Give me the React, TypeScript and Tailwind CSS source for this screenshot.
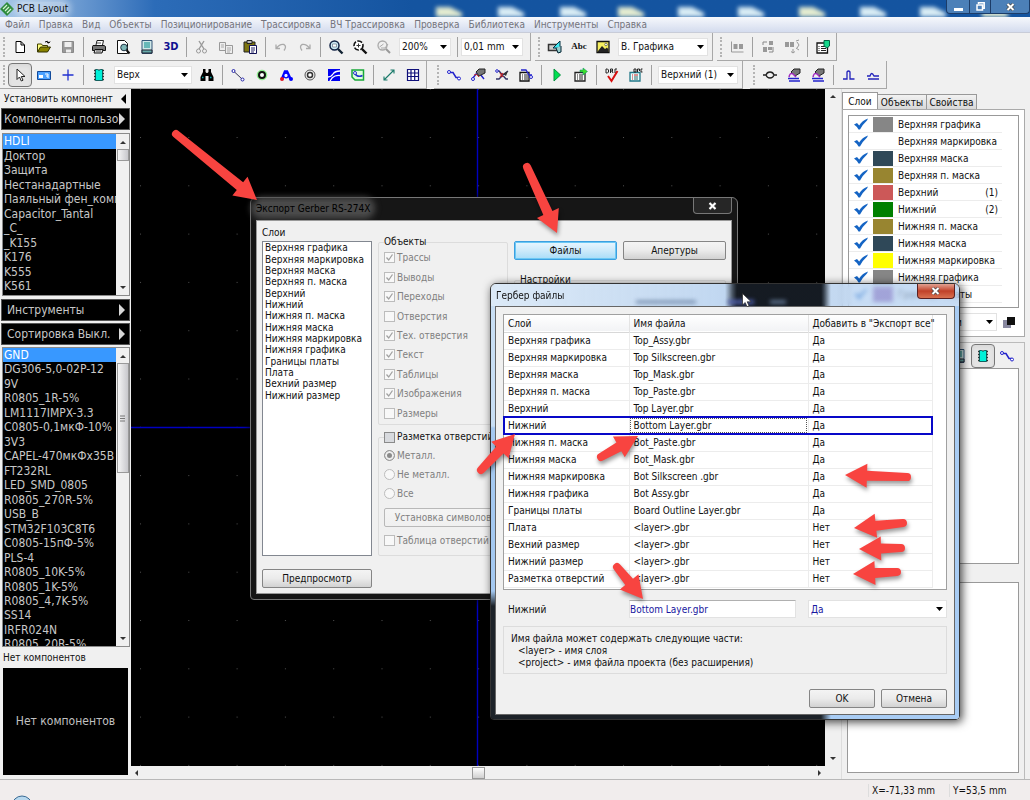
import { useState, type ReactNode } from "react";
import { clsx } from "clsx";

interface Layer {
  name: string;
  color: string;
  num?: string;
}

interface GerberFile {
  layer: string;
  file: string;
  all: string;
}

interface ArrowProps {
  from: [number, number];
  to: [number, number];
}

const menuItems = [
  "Файл", "Правка", "Вид", "Объекты", "Позиционирование", "Трассировка",
  "ВЧ Трассировка", "Проверка", "Библиотека", "Инструменты", "Справка"
];

const libraries = [
  "HDLI", "Доктор", "Защита", "Нестанадартные", "Паяльный фен_комп", "Capacitor_Tantal",
  "_C_", "_K155", "K176", "K555", "K561"
];

const components = [
  "GND", "DG306-5,0-02P-12", "9V", "R0805_1R-5%", "LM1117IMPX-3.3", "C0805-0,1мкФ-10%", "3V3",
  "CAPEL-470мкФx35В", "FT232RL", "LED_SMD_0805", "R0805_270R-5%", "USB_B", "STM32F103C8T6",
  "C0805-15пФ-5%", "PLS-4", "R0805_10K-5%", "R0805_1K-5%", "R0805_4,7K-5%", "SS14",
  "IRFR024N", "R0805_20R-5%"
];

const layers: Layer[] = [
  { name: "Верхняя графика", color: "#868686" },
  { name: "Верхняя маркировка", color: "#ffffff" },
  { name: "Верхняя маска", color: "#2f4858" },
  { name: "Верхняя п. маска", color: "#988530" },
  { name: "Верхний", color: "#cc5858", num: "(1)" },
  { name: "Нижний", color: "#008000", num: "(2)" },
  { name: "Нижняя п. маска", color: "#988530" },
  { name: "Нижняя маска", color: "#2f4858" },
  { name: "Нижняя маркировка", color: "#ffff00" },
  { name: "Нижняя графика", color: "#868686" },
  { name: "Границы платы", color: "#8040a0" }
];

const exportLayers = [
  "Верхняя графика", "Верхняя маркировка", "Верхняя маска", "Верхняя п. маска", "Верхний",
  "Нижний", "Нижняя п. маска", "Нижняя маска", "Нижняя маркировка", "Нижняя графика",
  "Границы платы", "Плата", "Вехний размер", "Нижний размер"
];

const exportObjects = [
  { name: "Трассы", on: true },
  { name: "Выводы", on: true },
  { name: "Переходы", on: true },
  { name: "Отверстия", on: false },
  { name: "Тех. отверстия", on: true },
  { name: "Текст", on: true },
  { name: "Таблицы", on: true },
  { name: "Изображения", on: true },
  { name: "Размеры", on: false }
];

const gerberFiles: GerberFile[] = [
  { layer: "Верхняя графика", file: "Top_Assy.gbr", all: "Да" },
  { layer: "Верхняя маркировка", file: "Top Silkscreen.gbr", all: "Да" },
  { layer: "Верхняя маска", file: "Top_Mask.gbr", all: "Да" },
  { layer: "Верхняя п. маска", file: "Top_Paste.gbr", all: "Да" },
  { layer: "Верхний", file: "Top Layer.gbr", all: "Да" },
  { layer: "Нижний", file: "Bottom Layer.gbr", all: "Да" },
  { layer: "Нижняя п. маска", file: "Bot_Paste.gbr", all: "Да" },
  { layer: "Нижняя маска", file: "Bot_Mask.gbr", all: "Да" },
  { layer: "Нижняя маркировка", file: "Bot Silkscreen .gbr", all: "Да" },
  { layer: "Нижняя графика", file: "Bot Assy.gbr", all: "Да" },
  { layer: "Границы платы", file: "Board Outline Layer.gbr", all: "Да" },
  { layer: "Плата", file: "<layer>.gbr", all: "Нет" },
  { layer: "Вехний размер", file: "<layer>.gbr", all: "Нет" },
  { layer: "Нижний размер", file: "<layer>.gbr", all: "Нет" },
  { layer: "Разметка отверстий", file: "<layer>.gbr", all: "Нет" }
];

const arrows: ArrowProps[] = [
  { from: [176, 134], to: [257, 200] },
  { from: [527, 167], to: [557, 233] },
  { from: [481, 470], to: [515, 434] },
  { from: [601, 457], to: [638, 436] },
  { from: [617, 567], to: [643, 599] },
  { from: [907, 477], to: [845, 475] },
  { from: [903, 523], to: [854, 528] },
  { from: [901, 548], to: [859, 549] },
  { from: [897, 572], to: [853, 574] }
];

// 16x16 toolbar glyphs
const glyphs: Record<string, ReactNode> = {
  file: <path d="M4 2.5h5l3.5 3.5v7.5h-8.5zM9 2.5v3.5h3.5" fill="#fff" stroke="#000" />,
  open: (
    <>
      <path d="M1.500 13V5h4l1 1.500h5V8" fill="#ffff80" stroke="#404000" />
      <path d="M1.500 13l3-5h10l-3 5z" fill="#8a8400" stroke="#303000" />
      <path d="M9 3q3-2 4 1l1-1.500M13 4l-2-.5" fill="none" stroke="#000" />
    </>
  ),
  save: (
    <>
      <path d="M2.500 2.500h11v11h-11z" fill="#999" stroke="#888" />
      <path d="M4.500 3h7v5h-7zM6 10.500h5v3h-5z" fill="#eee" />
    </>
  ),
  print: (
    <>
      <path d="M5 6l1-4.500h6.500L11.500 6" fill="#fff" stroke="#222" />
      <path d="M2 6.500h11l1.500 1v4h-13v-4z" fill="#777" stroke="#111" />
      <path d="M4 10.500h8l-1 3.500H3z" fill="#ddd" stroke="#111" />
      <path d="M6 4h4M5 12h5" stroke="#555" />
    </>
  ),
  preview: (
    <>
      <path d="M2.500 1.500h7l3 3v10h-10z" fill="#fff" stroke="#111" />
      <circle cx="9" cy="8.500" r="3.300" fill="#7fb8b8" stroke="#234" />
      <path d="M11.500 11l3 3.500" stroke="#111" strokeWidth="2" />
    </>
  ),
  report: (
    <>
      <path d="M3 1.500h10v13H3z" fill="#cfe8e8" stroke="#357" />
      <path d="M5 4h6M5 6h6M5 8h6" stroke="#088" />
      <path d="M3 11h10v3H3z" fill="#6aa" stroke="#223" />
    </>
  ),
  cut: (
    <>
      <path d="M5 2l5 8M10 2l-5 8" stroke="#999" strokeWidth="1.400" />
      <circle cx="4.500" cy="12" r="2" fill="none" stroke="#999" />
      <circle cx="10.500" cy="12" r="2" fill="none" stroke="#999" />
    </>
  ),
  copy: (
    <>
      <path d="M1.500 3.500h6v8h-6zM7.500 6.500h7v8h-7z" fill="#eee" stroke="#999" />
      <path d="M3 6h3M3 8h3M9 9h4M9 11h4M9 13h3" stroke="#aaa" />
    </>
  ),
  paste: (
    <>
      <path d="M2 3h11v10H2z" fill="#7c7410" stroke="#222" />
      <path d="M5 1.500h5v3H5z" fill="#bbb" stroke="#222" />
      <path d="M7.500 6.500h7v8h-7z" fill="#fff" stroke="#115" />
      <path d="M9 9h4M9 11h4M9 13h3" stroke="#226" />
    </>
  ),
  undo: <path d="M3 5.500v4h4M3 9.500q4-5 8-4 3 2 0 6" fill="none" stroke="#aaa" strokeWidth="1.300" />,
  redo: <path d="M13 5.500v4H9M13 9.500q-4-5-8-4-3 2 0 6" fill="none" stroke="#aaa" strokeWidth="1.300" />,
  zoom: (
    <>
      <circle cx="6.500" cy="6.500" r="4.500" fill="#cdeaf5" stroke="#124" strokeWidth="1.500" />
      <path d="M4.500 5h4v3h-4z" fill="#fff" stroke="#678" strokeWidth=".7" />
      <path d="M10 10l4.500 4.500" stroke="#123" strokeWidth="2.400" />
    </>
  ),
  zoomFit: (
    <>
      <circle cx="6.500" cy="6.500" r="4.500" fill="#fff" stroke="#111" strokeWidth="1.600" strokeDasharray="5 1.500" />
      <path d="M4.500 6.500h4M6.500 4.500v4" stroke="#333" />
      <path d="M10 10l4.500 4.500" stroke="#111" strokeWidth="2.400" />
    </>
  ),
  zoomBack: (
    <>
      <circle cx="6.500" cy="6.500" r="4.500" fill="none" stroke="#aaa" strokeWidth="1.300" />
      <path d="M3.500 8l4-3M5 9h4l3-4" fill="none" stroke="#aaa" />
      <path d="M10 10l4 4" stroke="#999" strokeWidth="2" />
    </>
  ),
  place: (
    <>
      <path d="M1.500 5.500h9v6h-9z" fill="#ccc" stroke="#333" strokeWidth="1.500" />
      <path d="M6 9l7-7v7z" fill="#40e8f0" stroke="#034" />
      <path d="M9 9l2 5 3-1V7" fill="#9cc" stroke="#023" />
    </>
  ),
  picture: (
    <>
      <path d="M2 2.500h12v11H2z" fill="#f5ee60" stroke="#111" strokeWidth="1.300" />
      <path d="M3 12l4-5 3 3 2-1.500 1.500 2V13H3z" fill="#222" />
      <circle cx="11" cy="5.500" r="1.300" fill="#fff" stroke="#333" strokeWidth=".6" />
    </>
  ),
  align: (
    <>
      <path d="M2.500 2.500v10.500h12" fill="none" stroke="#999" />
      <path d="M4.500 5h4v5h-4zM10 5h4v5h-4z" fill="#999" />
    </>
  ),
  shift: (
    <>
      <path d="M9 2h4v4H9zM3 8h4v5H3zM8 8h4v3H8z" fill="#999" />
      <path d="M3 6V3h4M13 8v5H9" fill="none" stroke="#888" />
    </>
  ),
  expand: (
    <>
      <path d="M1 3h4v5H1zM6 3h4v5H6z" fill="#999" />
      <path d="M12 2l3-1M12 9l3 2M13 3l2 3-2 3M9 10v4l-2-1.500M9 14l2-1.500" fill="none" stroke="#999" />
    </>
  ),
  sheet: (
    <>
      <path d="M2 4h10.500v10H2z" fill="#fff" stroke="#111" strokeWidth="1.300" />
      <path d="M3.500 7.500h1M6 7.500h5M3.500 9.500h1M6 9.500h5M3.500 11.500h1M6 11.500h5" stroke="#222" />
      <path d="M9 1.500h5.500V7L12 9 9 7z" fill="#15d78a" stroke="#064" />
    </>
  ),
  pointer: <path d="M5 2v10.500l2.500-2.500 1.800 4 1.700-.8-1.700-3.700H13z" fill="#fff" stroke="#222" />,
  board: (
    <>
      <path d="M1.500 4.500h13v8h-13z" fill="#4aa0ff" stroke="#124a9a" />
      <path d="M3 8h4v3H3z" fill="#fff" />
      <path d="M9 7h3v4M10 9h2" fill="none" stroke="#fff" />
    </>
  ),
  plus: <path d="M8 2.500v11M2.500 8h11" stroke="#2030d0" strokeWidth="1.300" />,
  chip: (
    <>
      <path d="M3 3.500h10M3 6.500h10M3 9.500h10M3 12.500h10" stroke="#333" strokeWidth="1.500" />
      <path d="M4.500 2.500h2q1.500 1.500 3 0h2v11h-7z" fill="#00f0d8" stroke="#044" strokeWidth=".8" />
    </>
  ),
  binoculars: (
    <>
      <path d="M4 2h2.500v3l1 1h1l1-1V2H12v3l2.500 5v4H9.500V9h-3v5H1.500v-4L4 5z" fill="#000" />
      <path d="M3 10.500h1.500M11 10.500h1.500" stroke="#0aa" strokeWidth="1.500" />
    </>
  ),
  line: (
    <>
      <path d="M4 4.500l8 7.500" stroke="#335" />
      <circle cx="3.500" cy="4" r="1.500" fill="#fff" stroke="#22a" />
      <circle cx="12.500" cy="12.500" r="1.500" fill="#fff" stroke="#22a" />
    </>
  ),
  pad: (
    <>
      <circle cx="8" cy="8" r="4.800" fill="#9f9" stroke="#8e8" />
      <circle cx="8" cy="8" r="3" fill="#fff" stroke="#111" strokeWidth="2" />
    </>
  ),
  arc: (
    <>
      <path d="M4 12L7 4.500h2L12.500 12" fill="none" stroke="#00f" strokeWidth="2.600" />
      <circle cx="4" cy="12" r="2" fill="#e01020" />
      <circle cx="8" cy="8.500" r="2.300" fill="#f4f4ff" stroke="#00f" strokeWidth="1.300" />
      <circle cx="13" cy="12" r="2" fill="#00f" />
    </>
  ),
  via: (
    <>
      <circle cx="8" cy="8" r="5" fill="#eee" stroke="#555" />
      <circle cx="8" cy="8" r="2.500" fill="#fff" stroke="#333" strokeWidth="1.500" />
    </>
  ),
  copper: (
    <>
      <path d="M2 2h12v12H2z" fill="#0000f0" />
      <path d="M2 10q3 0 5-3t7-3M4 14q2-4 5-5t5-.5" fill="none" stroke="#fff" strokeWidth="1.300" />
    </>
  ),
  pour: (
    <>
      <path d="M2 3h11.500v10H5L2 10z" fill="#dfd" stroke="#18a838" strokeWidth="1.500" />
      <path d="M4.500 6q3 5 8 2.500" fill="none" stroke="#23c" strokeWidth="1.500" />
      <circle cx="5" cy="6" r="1.500" fill="#fff" stroke="#23c" />
    </>
  ),
  measure: <path d="M3 13L13 3M9.500 3H13v3.500M3 9.500V13h3.500" fill="none" stroke="#1a7a6a" strokeWidth="1.100" />,
  grid: <path d="M2.500 2.500h11v11h-11zM2.500 6h11M2.500 9.500h11M6 2.500v11M9.700 2.500v11" fill="#fff" stroke="#10107a" strokeWidth="1.200" />,
  route: (
    <>
      <path d="M3.500 5.500h3.500l3 5h2.500" fill="none" stroke="#22c" strokeWidth="1.500" />
      <circle cx="3" cy="5" r="1.500" fill="#fff" stroke="#22c" />
      <circle cx="13" cy="11.500" r="1.500" fill="#fff" stroke="#22c" />
    </>
  ),
  reroute: (
    <>
      <path d="M3 11l3-4h4l4 5" fill="none" stroke="#22c" strokeWidth="1.400" />
      <path d="M6 5l3-3h6v4l-6 3z" fill="#777" stroke="#222" />
      <path d="M4 8q3-2 5 2" fill="none" stroke="#c22" />
      <circle cx="3" cy="12" r="1.500" fill="#fff" stroke="#22c" />
    </>
  ),
  unroute: (
    <>
      <path d="M2 4h3l7 8h2M2 12h3l5-5 4-3" fill="none" stroke="#336" strokeWidth="1.400" />
      <path d="M9 7l5-3-2 5z" fill="#333" />
      <circle cx="3" cy="4" r="1.300" fill="#fff" stroke="#22c" />
      <path d="M6 6l3 4M9 6l-3 4" stroke="#c22" strokeWidth="1.200" />
    </>
  ),
  setup: (
    <>
      <path d="M2 5.500h9v8.500H2z" fill="#fff" stroke="#111" strokeWidth="1.300" />
      <path d="M4 8h1M6 8h4M4 10h1M6 10h4M4 12h1M6 12h4" stroke="#222" />
      <path d="M3 3h5l3 5h3" fill="none" stroke="#22c" strokeWidth="1.300" />
      <circle cx="13" cy="10" r="1.500" fill="#fff" stroke="#22c" />
    </>
  ),
  run: <path d="M5 2l6.500 6L5 14z" fill="#00e050" stroke="#089040" />,
  runList: (
    <>
      <path d="M2 5.500h10v8.500H2z" fill="#fff" stroke="#222" strokeWidth="1.300" />
      <path d="M4 8h1M6 8h4M4 10h1M6 10h4M4 12h1M6 12h4" stroke="#222" />
      <path d="M7 5V3h3V1l4.500 3.500L10 8V5z" fill="#3ee02a" stroke="#086" strokeWidth=".5" />
    </>
  ),
  drc: (
    <>
      <path d="M2 6V2h1.500L4.500 3v2l-1 1zM6.500 6V2h2v2h-2M8 4l1 2M13 2h-2v4h2" fill="none" stroke="#222" strokeWidth="1" />
      <path d="M4 9l3.500 5L13.500 4" fill="none" stroke="#d81010" strokeWidth="2" />
    </>
  ),
  drcSetup: (
    <>
      <path d="M2 5.500h10v8.500H2z" fill="#e8ffff" stroke="#278" strokeWidth="1.300" />
      <path d="M4 8h1M6 8h4M4 10h1M4 12h1" stroke="#c22" />
      <path d="M6 10h4M6 12h4" stroke="#366" />
      <path d="M6 5V2h2v3zM9.500 5V2h2v2M14.500 2H13v3h1.500" fill="none" stroke="#222" />
    </>
  ),
  pair: <path d="M1 8h3M12 8h3M4 8q1-3 4-3t4 3M4 8q1 3 4 3t4-3" fill="none" stroke="#222" strokeWidth="1.300" />,
  pairEdit: (
    <>
      <path d="M5 5l3-3h6v4l-5 3z" fill="#777" stroke="#222" />
      <path d="M3 10q1-5 4-3l3 3" fill="none" stroke="#a22ac0" strokeWidth="1.500" />
      <path d="M2 11.500h11M3 14h11" stroke="#22c" strokeWidth="1.300" />
    </>
  ),
  pulse: <path d="M2 12h4V5q1.500-2 3 0v7h4.500" fill="none" stroke="#22b" strokeWidth="1.300" />,
  pulseLow: <path d="M2 9h3q1.500-5 4 0h5M3 12h11" fill="none" stroke="#22b" strokeWidth="1.300" />,
  squares: (
    <>
      <path d="M2 6h8v8H2z" fill="#8888a0" />
      <path d="M6 3h8v8H6z" fill="#111" />
    </>
  )
};

function Icon({ name }: { name: string }) {
  return (
    <svg className="h-4 w-4 shrink-0" viewBox="0 0 16 16">
      {glyphs[name]}
    </svg>
  );
}

function Tool({ name, pressed }: { name: string; pressed?: boolean }) {
  return (
    <button
      type="button"
      aria-label={name}
      className={clsx(
        "flex h-6 w-6 items-center justify-center",
        pressed && "rounded-sm border border-[#777] bg-[#e4e4e4] shadow-inner"
      )}
    >
      <Icon name={name} />
    </button>
  );
}

function Sep() {
  return (
    <div className="flex w-[7px] justify-center">
      <div className="h-5 w-px bg-[#a0a0a0]" />
    </div>
  );
}

function Toolbar({ children }: { children: ReactNode }) {
  return (
    <div className="flex h-7 items-center border-r border-b border-[#a8a8a8] pr-px">
      <div className="flex w-2 justify-center">
        <div className="h-5 border-l-2 border-dotted border-[#b4b4b4]" />
      </div>
      {children}
    </div>
  );
}

function Combo({ label, value, className }: { label: string; value: string; className?: string }) {
  return (
    <div className={clsx("relative shrink-0", className)}>
      <select
        aria-label={label}
        className="block h-[18px] w-full appearance-none border border-[#e2e2e2] bg-white pl-[2px] text-inherit outline-none"
      >
        <option>{value}</option>
      </select>
      <svg className="pointer-events-none absolute top-[7px] right-1 h-1 w-[7px]" viewBox="0 0 7 4">
        <path d="M0 0h7L3.500 4z" fill="#000" />
      </svg>
    </div>
  );
}

function PanelButton({ children, wide }: { children: ReactNode; wide?: boolean }) {
  return (
    <button
      type="button"
      className={clsx(
        "flex h-[22px] w-full items-center justify-between overflow-hidden border border-[#555] bg-black pr-1 text-[12px] text-[#c8c8c8]",
        wide ? "pl-[2px]" : "pl-[5px]"
      )}
    >
      <span className="overflow-hidden whitespace-nowrap">{children}</span>
      <svg className="h-3 w-[6px] shrink-0" viewBox="0 0 6 12">
        <path d="M0 0l6 6-6 6z" fill="#d8d8d8" />
      </svg>
    </button>
  );
}

function ScrollArrow({ dir }: { dir: "up" | "down" | "left" | "right" }) {
  const paths = {
    up: "M1 6h6L4 3z",
    down: "M1 2h6L4 5z",
    left: "M5 1v6L2 4z",
    right: "M3 1v6l3-3z"
  };
  return (
    <svg className="h-2 w-2 shrink-0" viewBox="0 0 8 8">
      <path d={paths[dir]} fill="#333" />
    </svg>
  );
}

function ListScroll({ thumb, grip }: { thumb: string; grip?: boolean }) {
  return (
    <div className="flex w-[13px] shrink-0 flex-col items-center bg-[#f0f0f0] pt-1 pb-[3px]">
      <ScrollArrow dir="up" />
      <div className={clsx("mt-[3px] flex w-3 items-center justify-center border border-[#999] bg-linear-to-r from-[#f5f5f5] to-[#c8c8cc]", thumb)}>
        {grip && (
          <svg className="h-[7px] w-[5px]" viewBox="0 0 5 7">
            <path d="M0 1h5M0 3.500h5M0 6h5" stroke="#777" />
          </svg>
        )}
      </div>
      <div className="grow" />
      <ScrollArrow dir="down" />
    </div>
  );
}

function DarkList({ items, selected, onSelect, rowsClass, children }: {
  items: string[];
  selected: string;
  onSelect: (item: string) => void;
  rowsClass: string;
  children: ReactNode;
}) {
  return (
    <div className="flex h-full overflow-hidden border border-[#8a8a8a] bg-black">
      <ul className={clsx("flex min-w-0 grow flex-col text-[12px] leading-[14px] text-[#c8c8c8]", rowsClass)}>
        {items.map((item) => (
          <li
            key={item}
            onClick={() => onSelect(item)}
            className={clsx(
              "flex-1 overflow-hidden pl-px whitespace-nowrap",
              item === selected && "bg-[#3898ff] text-white"
            )}
          >
            {item}
          </li>
        ))}
      </ul>
      {children}
    </div>
  );
}

function Check({ label, checked, disabled = true }: { label: string; checked?: boolean; disabled?: boolean }) {
  return (
    <label className={clsx("flex items-center gap-[2px] whitespace-nowrap", disabled && "text-[#808080]")}>
      <span className="relative h-[11px] w-[11px] shrink-0">
        <input
          type="checkbox"
          defaultChecked={checked}
          disabled={disabled}
          className={clsx(
            "peer block h-[11px] w-[11px] appearance-none border",
            disabled ? "border-[#bcbcbc] bg-[#f8f8f8]" : "border-[#8a8a8a] bg-[#d8dade]"
          )}
        />
        <svg className="pointer-events-none absolute inset-0 hidden h-[11px] w-[11px] peer-checked:block" viewBox="0 0 11 11">
          <path d="M2.500 5.500l2.200 2.500 3.800-5.500" fill="none" stroke="#a0a0a0" strokeWidth="1.300" />
        </svg>
      </span>
      {label}
    </label>
  );
}

function Radio({ label, checked }: { label: string; checked?: boolean }) {
  return (
    <label className="flex items-center gap-[2px] text-[#808080]">
      <input
        type="radio"
        name="drill"
        disabled
        defaultChecked={checked}
        className="h-[11px] w-[11px] appearance-none rounded-full border border-[#bcbcbc] bg-[#f8f8f8] checked:border-[#999] checked:bg-[#8a8a8a] checked:shadow-[inset_0_0_0_2px_#eee]"
      />
      {label}
    </label>
  );
}

function WinButton({ children, className }: { children: ReactNode; className?: string }) {
  return (
    <button
      type="button"
      className={clsx(
        "h-[19px] rounded-xs border bg-linear-to-b",
        className ?? "border-[#858585] from-[#f4f4f4] via-[#ebebeb] to-[#d2d2d2]"
      )}
    >
      {children}
    </button>
  );
}

function CloseMark() {
  return (
    <svg className="h-2 w-[9px]" viewBox="0 0 9 8">
      <path d="M1.500 1l6 6M7.500 1l-6 6" stroke="#444" strokeWidth="3.400" />
      <path d="M1.500 1l6 6M7.500 1l-6 6" stroke="#fff" strokeWidth="2" />
    </svg>
  );
}

function Arrow({ from, to }: ArrowProps) {
  const dx = to[0] - from[0];
  const dy = to[1] - from[1];
  const len = Math.hypot(dx, dy);
  const angle = (Math.atan2(dy, dx) * 180) / Math.PI;
  return (
    <g transform={`translate(${from[0]} ${from[1]}) rotate(${angle})`} fill="#f84440">
      <path d={`M0 -4L${len - 22} -5V-12L${len} 0L${len - 22} 12V5L0 4A4 4 0 0 1 0 -4Z`} />
    </g>
  );
}

function ExportDialog() {
  return (
    <section className="absolute top-[197px] left-[250px] flex h-[403px] w-[488px] flex-col rounded-t-md rounded-b-sm border border-[#777] bg-[#161616] p-[5px] pt-0 shadow-[0_0_8px_rgba(0,0,0,0.8)]">
      <header className="flex h-[22px] shrink-0 justify-between">
        <h2 className="mt-1 h-3 rounded-full bg-[#4a4a4a] text-black shadow-[0_0_6px_5px_#4a4a4a]">Экспорт Gerber RS-274X</h2>
        <button
          type="button"
          aria-label="Закрыть"
          className="flex h-4 w-[39px] items-center justify-center rounded-b border border-t-0 border-[#777] bg-[#262626]"
        >
          <CloseMark />
        </button>
      </header>

      <div className="flex grow gap-[6px] border border-[#999] bg-[#f0f0f0] pt-[5px] pl-[5px]">
        {/* Layer list */}
        <div className="flex w-[110px] shrink-0 flex-col">
          <h3 className="h-[15px] leading-[14px]">Слои</h3>
          <div className="h-[315px] border border-[#828790] bg-white pl-[2px]">
            <ul className="flex h-[159px] flex-col leading-[11px]">
              {exportLayers.map((name) => (
                <li key={name} className="flex min-h-0 flex-1 items-center whitespace-nowrap">{name}</li>
              ))}
            </ul>
          </div>
          <div className="mt-[13px] flex flex-col">
            <WinButton>Предпросмотр</WinButton>
          </div>
        </div>

        {/* Objects */}
        <div className="flex w-[130px] shrink-0 flex-col pt-[10px]">
          <fieldset className="rounded-xs border border-[#dcdcdc] px-[5px] pb-px">
            <legend className="leading-[12px]">Объекты</legend>
            <div className="flex h-[175px] flex-col">
              {exportObjects.map((obj) => (
                <div key={obj.name} className="flex flex-1 items-center">
                  <Check label={obj.name} checked={obj.on} />
                </div>
              ))}
            </div>
          </fieldset>
          <fieldset className="mt-[6px] rounded-xs border border-[#dcdcdc] px-[5px] pb-2">
            <legend className="leading-[12px]">
              <Check label="Разметка отверстий" disabled={false} />
            </legend>
            <div className="mt-[6px] flex flex-col gap-[6px] leading-[13px]">
              <Radio label="Металл." checked />
              <Radio label="Не металл." />
              <Radio label="Все" />
            </div>
            <div className="mt-2 mb-[7px] flex flex-col text-[#808080]">
              <WinButton className="border-[#b8b8b8] from-[#f4f4f4] to-[#f0f0f0] whitespace-nowrap">Установка символов</WinButton>
            </div>
            <Check label="Таблица отверстий" />
          </fieldset>
        </div>

        {/* Settings */}
        <div className="flex grow flex-col gap-[14px] pt-[15px] pr-[5px]">
          <div className="grid grid-cols-2 gap-[6px]">
            <WinButton className="border-[#3c9fe0] from-[#e8f6ff] via-[#cdeafa] to-[#a8dcf8] ring-1 ring-[#6cc8f4] ring-inset">Файлы</WinButton>
            <WinButton>Апертуры</WinButton>
          </div>
          <fieldset className="grow rounded-xs border border-[#dcdcdc] px-[5px]">
            <legend className="leading-[12px]">Настройки</legend>
          </fieldset>
        </div>
      </div>
    </section>
  );
}

function GerberDialog() {
  const [selected, setSelected] = useState("Нижний");
  const [fileName, setFileName] = useState("Bottom Layer.gbr");

  const handleSelect = (row: GerberFile) => {
    setSelected(row.layer);
    setFileName(row.file);
  };

  return (
    <section className="absolute top-[283px] left-[490px] flex h-[437px] w-[470px] flex-col overflow-hidden rounded-t-md rounded-b-sm border border-[#333] shadow-[2px_2px_10px_rgba(0,0,0,0.75)]">
      {/* Glass caption */}
      <header className="flex h-[22px] shrink-0 justify-between bg-[linear-gradient(90deg,rgba(216,232,248,.85)_0,rgba(176,206,240,.75)_234px,rgba(22,28,36,.96)_246px,rgba(22,28,36,.96)_330px,rgba(176,206,240,.7)_340px)] pr-1 pl-[5px] backdrop-blur-[2px]">
        <h2 className="mt-[5px] leading-[13px]">Гербер файлы</h2>
        <svg className="mt-[15px] h-2 w-[210px] blur-[2px]" viewBox="0 0 210 8" aria-hidden="true">
          <path d="M0 3h60" stroke="#7088a8" strokeWidth="3" />
          <path d="M92 3h26" stroke="#5060b0" strokeWidth="4" />
          <path d="M134 3h16" stroke="#7088a8" strokeWidth="3" />
        </svg>
        <button
          type="button"
          aria-label="Закрыть окно"
          className="flex h-[15px] w-[38px] items-center justify-center rounded-b border border-t-0 border-[#5a2020] bg-linear-to-b from-[#e0a090] via-[#c04028] to-[#d87050]"
        >
          <CloseMark />
        </button>
      </header>

      <div className="flex grow bg-[linear-gradient(180deg,#c8def4_0,#c8def4_120px,#a4c8f0_122px,#a4c8f0_285px,#1c2228_300px)]">
        <div className="w-1 shrink-0" />
        <div className="flex grow flex-col border border-[#666] bg-[#f0f0f0] px-[7px] pt-[7px]">
          <div className="h-[276px] border border-[#a0a0a0] bg-white">
            <table className="w-[428px] table-fixed border-collapse text-left">
              <colgroup>
                <col className="w-[125px]" />
                <col className="w-[179px]" />
                <col className="w-[124px]" />
              </colgroup>
              <thead>
                <tr className="h-[17px] border-b border-[#d8d8d8] bg-linear-to-b from-white to-[#f2f3f5]">
                  <th className="border-r border-[#e4e4e4] pl-1 font-normal">Слой</th>
                  <th className="border-r border-[#e4e4e4] pl-1 font-normal">Имя файла</th>
                  <th className="border-r border-[#e4e4e4] pl-1 font-normal whitespace-nowrap">Добавить в "Экспорт все"</th>
                </tr>
              </thead>
              <tbody>
                {gerberFiles.map((row) => {
                  const active = row.layer === selected;
                  return (
                    <tr
                      key={row.layer}
                      onClick={() => handleSelect(row)}
                      className={clsx(
                        "h-[17px] border-b border-[#ececec]",
                        active && "outline-2 -outline-offset-1 outline-[#0808c8]"
                      )}
                    >
                      <td className="border-r border-[#ececec] pl-1">{row.layer}</td>
                      <td className={clsx("border-r border-[#ececec] pl-1", active && "outline-1 -outline-offset-2 outline-dotted outline-[#555]")}>{row.file}</td>
                      <td className="border-r border-[#ececec] pl-1">{row.all}</td>
                    </tr>
                  );
                })}
              </tbody>
            </table>
          </div>

          <div className="mt-[10px] flex h-[18px] items-center pl-[5px]">
            <label htmlFor="gerber-name" className="w-[121px]">{selected}</label>
            <input
              id="gerber-name"
              value={fileName}
              onChange={(e) => setFileName(e.target.value)}
              className="mr-3 h-[18px] w-[167px] border border-[#e2e2e2] border-t-[#b0b0b0] bg-white text-[#1818a0] outline-none"
            />
            <Combo label='Добавить в "Экспорт все"' value="Да" className="grow text-[#1818a0]" />
          </div>

          <div className="mt-2 h-[48px] border border-[#dcdcdc] pt-[6px] pl-[7px] leading-[12px]">
            <p>Имя файла может содержать следующие части:</p>
            <p className="pl-[7px]">&lt;layer&gt; - имя слоя</p>
            <p className="pl-[7px]">&lt;project&gt; - имя файла проекта (без расширения)</p>
          </div>

          <div className="mt-[15px] flex justify-end">
            <div className="grid w-[138px] grid-cols-2 gap-[6px]">
              <WinButton>OK</WinButton>
              <WinButton>Отмена</WinButton>
            </div>
          </div>
        </div>
        <div className="w-1 shrink-0 bg-[#a8ccf4]" />
      </div>
      <div className="h-1 shrink-0 bg-[linear-gradient(90deg,#1c2228_0,#1c2228_330px,#a8ccf4_340px)]" />
    </section>
  );
}

function LeftPanel() {
  const [library, setLibrary] = useState("HDLI");
  const [component, setComponent] = useState("GND");

  return (
    <aside className="flex w-[131px] shrink-0 flex-col bg-[#f0f0f0] pr-px pl-px">
      <div className="flex h-[19px] items-center justify-between pr-1 pl-[3px]">
        <span>Установить компонент</span>
        <svg className="h-[10px] w-[5px]" viewBox="0 0 5 10">
          <path d="M5 0v10L0 5z" fill="#000" />
        </svg>
      </div>
      <PanelButton wide>Компоненты пользов</PanelButton>
      <div className="mt-[3px] h-[163px] pl-px">
        <DarkList items={libraries} selected={library} onSelect={setLibrary} rowsClass="h-[160px]">
          <ListScroll thumb="h-3" />
        </DarkList>
      </div>
      <div className="mt-[3px] flex flex-col gap-[2px]">
        <PanelButton>Инструменты</PanelButton>
        <PanelButton>Сортировка Выкл.</PanelButton>
      </div>
      <div className="mt-[2px] h-[300px] pl-px">
        <DarkList items={components} selected={component} onSelect={setComponent} rowsClass="h-[304px]">
          <ListScroll thumb="h-[110px]" grip />
        </DarkList>
      </div>
      <div className="flex h-[21px] items-center pl-[2px]">Нет компонентов</div>
      <div className="mx-[2px] mb-1 flex grow items-center justify-center bg-black text-[12px] text-[#c0c0c0]">
        Нет компонентов
      </div>
    </aside>
  );
}

function RightPanel() {
  return (
    <aside className="flex w-[189px] shrink-0 flex-col border-l border-[#ddd] bg-[#f0f0f0] pt-[3px] pr-[5px]">
      <div role="tablist" className="flex items-end">
        <button role="tab" type="button" className="h-[17px] w-9 border border-b-0 border-[#999] bg-white">Слои</button>
        <button role="tab" type="button" className="h-[15px] w-[49px] border border-b-0 border-l-0 border-[#999] bg-linear-to-b from-[#f2f2f2] to-[#d8d8d8]">Объекты</button>
        <button role="tab" type="button" className="h-[15px] w-[50px] border border-b-0 border-l-0 border-[#999] bg-linear-to-b from-[#f2f2f2] to-[#d8d8d8]">Свойства</button>
      </div>
      <div className="flex h-[228px] flex-col border border-[#aaa] bg-white p-[5px]">
        <ul className="h-[194px] border border-[#999] pr-4">
          {layers.map((layer) => (
            <li key={layer.name} className="flex h-[17px] items-center border-b border-[#ececec]">
              <label className="flex grow items-center">
                <span className="relative flex h-4 w-6 items-center justify-center">
                  <input type="checkbox" defaultChecked className="peer absolute inset-0 appearance-none" />
                  <svg className="hidden h-3 w-4 peer-checked:block" viewBox="0 0 16 12">
                    <path d="M1 6.500l3-1.500 2.200 2.500Q9 2.500 15 .5l-1 2Q10 6 7 11.500H5.500Q4 8.500 1 6.500z" fill="#1464c4" />
                  </svg>
                </span>
                <span className="mr-[5px] h-[15px] w-5" style={{ backgroundColor: layer.color }} />
                <span className="grow whitespace-nowrap">{layer.name}</span>
                <span className="pr-1">{layer.num}</span>
              </label>
            </li>
          ))}
        </ul>
        <div className="mt-[5px] flex items-center gap-1">
          <Combo label="Слои" value="Показать верхние слои" className="grow" />
          <button type="button" aria-label="Порядок слоев" className="w-[18px]">
            <Icon name="squares" />
          </button>
        </div>
      </div>

      <div className="mt-[5px] flex grow flex-col border-t border-r border-[#bbb] pr-[5px] pl-[5px]">
        <div className="flex h-[25px] items-center justify-end">
          <Tool name="report" />
          <Tool name="chip" pressed />
          <Tool name="route" />
        </div>
        <div className="h-[196px] border border-[#999] bg-white" />
        <div className="mt-[18px] mb-[6px] grow border border-[#999] bg-white" />
      </div>
    </aside>
  );
}

export default function App() {
  return (
    <div className="relative flex h-screen min-h-[800px] flex-col overflow-hidden bg-[#f0f0f0] font-['DejaVu_Sans_Condensed','DejaVu_Sans',sans-serif] text-[10px] leading-[13px] text-[#111]">
      {/* Title bar */}
      <header className="relative flex h-[17px] shrink-0 items-center justify-between overflow-hidden bg-linear-to-r from-[#a8c8e8] via-[#2c6cb8] via-15% to-[#1454a0] to-40%">
        <svg className="absolute inset-0 h-full w-full blur-[2px]" aria-hidden="true">
          {[436, 498, 560, 618, 678, 738, 799, 860, 920, 982].map((x, i) => (
            <path key={x} d={`M${x} 7h14l12 6v8h-26z`} fill={i % 3 === 0 ? "#e4ecd0" : "#d8ecf4"} />
          ))}
        </svg>
        <h1 className="relative flex items-center gap-[3px]">
          <svg className="h-[14px] w-[14px]" viewBox="0 0 14 14">
            <path d="M7 0l7 7-7 7-7-7z" fill="#2c8a3c" />
            <path d="M3 7l4-4M5 9l4-4M7 11l4-4" stroke="#d4f4d4" strokeWidth="1.200" />
          </svg>
          <span className="rounded-full bg-white/40 shadow-[0_0_6px_3px_rgba(255,255,255,0.4)]">PCB Layout</span>
        </h1>
        <div className="relative flex h-[14px] self-start overflow-hidden rounded-b border border-t-0 border-[#1c3c68] bg-[#4c80b8] text-white">
          <button type="button" aria-label="Свернуть" className="flex w-[23px] items-center justify-center border-r border-[#1c3c68]">
            <svg className="h-2 w-[9px]" viewBox="0 0 9 8"><path d="M0 5h9v3H0z" fill="#fff" /></svg>
          </button>
          <button type="button" aria-label="Развернуть" className="flex w-[21px] items-center justify-center border-r border-[#1c3c68]">
            <svg className="h-[9px] w-[9px]" viewBox="0 0 9 9">
              <path d="M2.500 2V.7h5.700v5.600H7M1 3h5.500v5H1z" fill="none" stroke="#fff" strokeWidth="1.500" />
            </svg>
          </button>
          <button type="button" aria-label="Выход" className="flex w-[38px] items-center justify-center">
            <CloseMark />
          </button>
        </div>
      </header>

      {/* Menu */}
      <nav className="flex h-4 shrink-0 items-center gap-[9px] border-b border-[#c8ccd8] bg-linear-to-b from-[#f6f8fc] to-[#d4dcee] pl-[5px] text-[#74747c]">
        {menuItems.map((item) => (
          <button key={item} type="button" className="whitespace-nowrap">{item}</button>
        ))}
      </nav>

      {/* Toolbars */}
      <div className="flex shrink-0 gap-1">
        <Toolbar>
          <Tool name="file" />
          <Tool name="open" />
          <Tool name="save" />
          <Sep />
          <Tool name="print" />
          <Tool name="preview" />
          <Tool name="report" />
          <button type="button" className="h-6 w-6 text-[11px] font-bold text-[#101090]">3D</button>
          <Sep />
          <Tool name="cut" />
          <Tool name="copy" />
          <Tool name="paste" />
          <Sep />
          <Tool name="undo" />
          <Tool name="redo" />
          <Sep />
          <Tool name="zoom" />
          <Tool name="zoomFit" />
          <Tool name="zoomBack" />
          <Combo label="Масштаб" value="200%" className="mx-[3px] w-[52px]" />
          <Sep />
          <Combo label="Шаг сетки" value="0,01 mm" className="mr-[6px] w-[62px]" />
        </Toolbar>
        <Toolbar>
          <Tool name="place" />
          <button type="button" className="h-6 w-6 font-['Liberation_Serif',serif] text-[9px] font-bold">Abc</button>
          <Tool name="picture" />
          <Combo label="Слой" value="В. Графика" className="mx-[3px] w-[90px]" />
        </Toolbar>
        <Toolbar>
          <Tool name="align" />
          <Sep />
          <Tool name="shift" />
          <Tool name="expand" />
          <Sep />
          <Tool name="sheet" />
        </Toolbar>
      </div>
      <div className="flex shrink-0 gap-[7px]">
        <Toolbar>
          <Tool name="pointer" pressed />
          <Tool name="board" />
          <Tool name="plus" />
          <Sep />
          <Tool name="chip" />
          <Combo label="Сторона" value="Верх" className="mx-[3px] w-[78px]" />
          <Tool name="binoculars" />
          <Sep />
          <Tool name="line" />
          <Tool name="pad" />
          <Tool name="arc" />
          <Tool name="via" />
          <Tool name="copper" />
          <Tool name="pour" />
          <Sep />
          <Tool name="measure" />
          <Tool name="grid" />
        </Toolbar>
        <Toolbar>
          <Tool name="route" />
          <Tool name="reroute" />
          <Tool name="unroute" />
          <Tool name="setup" />
          <Sep />
          <Tool name="run" />
          <Tool name="runList" />
          <Sep />
          <Tool name="drc" />
          <Tool name="drcSetup" />
          <Sep />
          <Combo label="Текущий слой" value="Верхний (1)" className="mx-[3px] w-[80px]" />
        </Toolbar>
        <Toolbar>
          <Tool name="pair" />
          <Tool name="pairEdit" />
          <Tool name="pairEdit" />
          <Sep />
          <Tool name="pulse" />
          <Tool name="pulseLow" />
        </Toolbar>
      </div>

      {/* Workspace */}
      <main className="flex min-h-0 grow">
        <LeftPanel />
        <div className="flex min-w-0 grow flex-col">
          <div className="flex min-h-0 grow">
            <svg className="h-full min-w-0 grow bg-black">
              <defs>
                <pattern id="dots" x="9" y="48" width="48.300" height="48.300" patternUnits="userSpaceOnUse">
                  <rect width="1" height="1" fill="#505050" />
                </pattern>
              </defs>
              <rect width="100%" height="100%" fill="url(#dots)" />
              <path d="M346.500 0V1200M0 338.500H1600" fill="none" stroke="#0000c0" strokeWidth="1.400" />
            </svg>
            <div className="flex w-4 shrink-0 flex-col items-center justify-between bg-[#f0f0f0] py-[3px]">
              <ScrollArrow dir="up" />
              <ScrollArrow dir="down" />
            </div>
          </div>
          <div className="flex h-[13px] shrink-0 items-center justify-between bg-[#f0f0f0] pr-[18px] pl-[2px]">
            <ScrollArrow dir="left" />
            <div className="h-3 w-[13px] border border-[#999] bg-linear-to-b from-white to-[#d0d0d0]" />
            <ScrollArrow dir="right" />
          </div>
        </div>
        <RightPanel />
      </main>

      {/* Status bar */}
      <footer className="flex h-[21px] shrink-0 items-center justify-between border-t border-[#b8b8b8] bg-[#f1eded] pl-[11px]">
        <svg className="h-4 w-[22px] self-end" viewBox="0 0 22 16">
          <circle cx="11" cy="22" r="10" fill="#b8d8ee" stroke="#3a6a94" />
        </svg>
        <div className="flex">
          <span className="w-[81px] border-l border-[#ddd] pl-[3px]">X=-71,33 mm</span>
          <span className="w-[81px] border-l border-[#ddd] pl-[3px]">Y=53,5 mm</span>
        </div>
      </footer>

      <ExportDialog />
      <GerberDialog />

      {/* Callout arrows */}
      <svg className="pointer-events-none absolute inset-0 h-full w-full drop-shadow-[1px_3px_2px_rgba(0,0,0,0.4)]">
        {arrows.map((arrow) => (
          <Arrow key={arrow.from.join()} {...arrow} />
        ))}
      </svg>
      <svg className="pointer-events-none absolute top-[293px] left-[742px] h-[15px] w-[10px]" viewBox="0 0 10 15">
        <path d="M.5.5v11.500l2.700-2.500 1.800 4.200 2-.9-1.800-4h4z" fill="#fff" stroke="#222" strokeWidth=".7" />
      </svg>
    </div>
  );
}
